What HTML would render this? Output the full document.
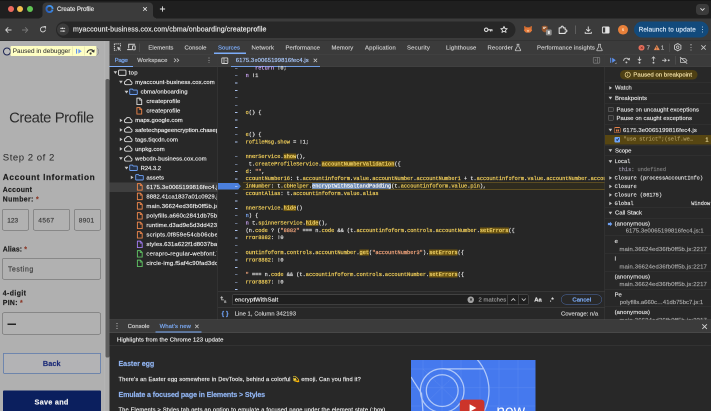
<!DOCTYPE html>
<html lang="en"><head><meta charset="utf-8"><title>Create Profile</title>
<style>
html,body{margin:0;padding:0;background:#282828;overflow:hidden;}
body{width:711px;height:411px;position:relative;}
#root{position:absolute;left:0;top:0;width:1422px;height:822px;transform:scale(0.5);transform-origin:0 0;overflow:hidden;will-change:transform;background:#282828;font-family:'Liberation Sans', sans-serif;}
.a{position:absolute;display:block;}
.t{white-space:nowrap;-webkit-text-stroke:0.35px currentColor;}
.hl{background:#6b5411;}
.hl span{color:#f3d469 !important;}
.sel{background:#6f8db6;}
.sel span,.sel2 span{color:#f4f4f4 !important;}
.sel2{background:#5a7299;}
</style></head><body><div id="root">
<div class="a" style="left:0px;top:0px;width:1422px;height:36.6px;background:#1f1f1f;"></div>
<div class="a" style="left:0px;top:36.6px;width:1422px;height:44.4px;background:#3b3b3b;"></div>
<div class="a" style="left:0px;top:0px;width:1422px;height:1.8px;background:#151515;"></div>
<div class="a" style="left:15.6px;top:12.2px;width:12px;height:12px;background:#ec6a5e;border-radius:50%;"></div>
<div class="a" style="left:34.2px;top:12.2px;width:12px;height:12px;background:#f4bf4f;border-radius:50%;"></div>
<div class="a" style="left:54px;top:12.2px;width:12px;height:12px;background:#61c554;border-radius:50%;"></div>
<div class="a" style="left:84.8px;top:4.8px;width:221.2px;height:32.6px;background:#3b3b3b;border-radius:8px 8px 0 0;"></div>
<div class="a" style="left:78.8px;top:30.4px;width:6px;height:6.2px;background:radial-gradient(circle at 0 0, #1f1f1f 5.5px, #3b3b3b 6.3px);"></div>
<div class="a" style="left:306px;top:30.4px;width:6px;height:6.2px;background:radial-gradient(circle at 100% 0, #1f1f1f 5.5px, #3b3b3b 6.3px);"></div>
<svg class="a" style="left:89.8px;top:8.8px;width:18px;height:18px;" viewBox="0 0 9 9"><defs><linearGradient id="fg" x1="1" y1="0" x2="0" y2="1"><stop offset="0" stop-color="#4aa0f5"/><stop offset="1" stop-color="#2458b8"/></linearGradient></defs><circle cx="4.5" cy="4.5" r="3.1" fill="none" stroke="url(#fg)" stroke-width="1.9" stroke-dasharray="18.4 1.1" transform="rotate(10 4.5 4.5)"/></svg>
<span class="a t" id="t1" style="top:9.52px;line-height:17.36px;font-size:12.4px;color:#e3e3e3;font-family:'Liberation Sans', sans-serif;letter-spacing:-0.126px;left:114px;">Create Profile</span>
<svg class="a" style="left:285.4px;top:12.8px;width:10px;height:10px;" viewBox="0 0 5 5"><path d="M.7.7L4.3 4.3M4.3.7L.7 4.3" stroke="#e3e3e3" stroke-width=".8" fill="none"/></svg>
<svg class="a" style="left:319.0px;top:11.8px;width:12px;height:12px;" viewBox="0 0 6 6"><path d="M3 .4V5.6M.4 3H5.6" stroke="#e3e3e3" stroke-width=".9" fill="none"/></svg>
<div class="a" style="left:1392.4px;top:7.6px;width:25.4px;height:22px;background:#3b3b3b;border-radius:7.0px;"></div>
<svg class="a" style="left:1399.0px;top:14px;width:12px;height:10px;" viewBox="0 0 6 5"><path d="M1 1.3L3 3.4L5 1.3" stroke="#e3e3e3" stroke-width=".9" fill="none"/></svg>
<svg class="a" style="left:9.2px;top:52px;width:16px;height:16px;" viewBox="0 0 8 8"><path d="M7 4H1.3M3.8 1.3L1.2 4L3.8 6.7" stroke="#d5d5d5" stroke-width=".9" fill="none"/></svg>
<svg class="a" style="left:42.4px;top:52px;width:16px;height:16px;" viewBox="0 0 8 8"><path d="M1 4H6.7M4.2 1.3L6.8 4L4.2 6.7" stroke="#777" stroke-width=".9" fill="none"/></svg>
<svg class="a" style="left:78px;top:51.2px;width:16px;height:16px;" viewBox="0 0 8 8"><path d="M6.4 4.2A2.5 2.5 0 1 1 5.6 2.1" stroke="#d5d5d5" stroke-width=".9" fill="none"/><path d="M4.6 1.1H6.6V3.1" stroke="#d5d5d5" stroke-width=".9" fill="none"/></svg>
<div class="a" style="left:112px;top:42.6px;width:919.0px;height:33.2px;background:#272727;border-radius:16.6px;"></div>
<div class="a" style="left:113.8px;top:47.2px;width:24px;height:24px;background:#3b3b3b;border-radius:12px;"></div>
<svg class="a" style="left:119.4px;top:52.8px;width:12.8px;height:12.8px;" viewBox="0 0 6.4 6.4"><path d="M.8 1.8H2.4M4 1.8H5.6M.8 4.6H2.4M4 4.6H5.6" stroke="#e3e3e3" stroke-width=".9" fill="none"/><circle cx="3" cy="1.8" r=".8" fill="#e3e3e3"/><circle cx="3.6" cy="4.6" r=".8" fill="#e3e3e3"/></svg>
<span class="a t" id="t2" style="top:49.4px;line-height:19.6px;font-size:14px;color:#e8e8e8;font-family:'Liberation Sans', sans-serif;letter-spacing:0.185px;left:146px;">myaccount-business.cox.com/cbma/onboarding/createprofile</span>
<svg class="a" style="left:966.8px;top:51.6px;width:19.2px;height:15.2px;" viewBox="0 0 9.6 7.6"><circle cx="2.7" cy="3.8" r="1.75" fill="none" stroke="#dadada" stroke-width="1.1"/><path d="M4.4 3.8H9M7 3.8V5.5M8.5 3.8V5.2" stroke="#dadada" stroke-width="1.1" fill="none"/></svg>
<svg class="a" style="left:1000px;top:51.2px;width:16px;height:16px;" viewBox="0 0 8 8"><path d="M4 .9L4.95 3L7.2 3.2L5.5 4.7L6 6.9L4 5.75L2 6.9L2.5 4.7L.8 3.2L3.05 3Z" stroke="#dadada" stroke-width=".95" fill="none" stroke-linejoin="round"/></svg>
<svg class="a" style="left:1047.2px;top:51.4px;width:18px;height:15.2px;" viewBox="0 0 9 7.6"><path d="M.6 .5L3.4 1.9H5.6L8.4 .5L8.1 3.6L8.6 5L6.6 7.1H2.4L.4 5L.9 3.6Z" fill="#e67a3a"/><path d="M3.2 4.6L4.5 7.1L5.8 4.6Z" fill="#f4c49c"/><path d="M.6 .5L3.4 1.9L2.6 3.6ZM8.4 .5L5.6 1.9L6.4 3.6Z" fill="#c9652a"/></svg>
<svg class="a" style="left:1082.4px;top:50.4px;width:22.4px;height:22px;" viewBox="0 0 11.2 11"><path d="M.8 1.4Q3.6 -.2 6.6 1.4V4.6Q6 6.6 3.7 7.4Q1.4 6.6 .8 4.6Z" fill="#96562e"/><path d="M2 2.3H5.2M2 3.6H4" stroke="#ead9c8" stroke-width=".8"/><rect x="4.9" y="4.5" width="5.8" height="5.9" rx="1.1" fill="#8d8d8d"/><rect x="6.9" y="5.9" width="1.9" height="3.1" rx=".5" fill="#e8e8e8"/></svg>
<svg class="a" style="left:1115.8px;top:49.8px;width:19.4px;height:19.4px;" viewBox="0 0 10 10"><path d="M1.2 3H3.2V2.3A1.1 1.1 0 0 1 5.4 2.3V3H7.4V5H8.1A1.1 1.1 0 0 1 8.1 7.2H7.4V8.7H1.2Z" stroke="#e4e4e4" stroke-width="1.05" fill="none" stroke-linejoin="round"/></svg>
<div class="a" style="left:1150.4px;top:51.0px;width:1.2px;height:17.0px;background:#5e5e5e;"></div>
<svg class="a" style="left:1167.6px;top:50.8px;width:17.0px;height:18px;" viewBox="0 0 8.5 9"><path d="M4.25 1V5.6M2.2 3.8L4.25 5.8L6.3 3.8M1.2 6.4V7.8H7.3V6.4" stroke="#e3e3e3" stroke-width=".9" fill="none"/></svg>
<svg class="a" style="left:1203.0px;top:51.6px;width:17.0px;height:16px;" viewBox="0 0 8.5 8"><rect x=".9" y="1" width="6.7" height="6" rx=".8" fill="none" stroke="#e3e3e3" stroke-width=".9"/><rect x="3.7" y="1" width="3.9" height="6" fill="#e3e3e3"/></svg>
<div class="a" style="left:1236.4px;top:49.6px;width:19.2px;height:19.2px;background:#e8803a;border-radius:50%;"></div>
<span class="a t" id="t3" style="top:52.76px;line-height:12.88px;font-size:9.2px;color:#ffd9b8;font-family:'Liberation Sans', sans-serif;left:1246px;transform:translateX(-50%);">s</span>
<div class="a" style="left:1268px;top:43.0px;width:149.0px;height:32.4px;background:#124a7c;border-radius:16.2px;"></div>
<span class="a t" id="t4" style="top:50.58px;line-height:17.64px;font-size:12.6px;color:#dcebfb;font-family:'Liberation Sans', sans-serif;letter-spacing:0.287px;left:1277.4px;">Relaunch to update</span>
<div class="a" style="left:1404.2px;top:53.3px;width:1.9px;height:1.9px;background:#dcebfb;border-radius:50%;"></div>
<div class="a" style="left:1404.2px;top:58.3px;width:1.9px;height:1.9px;background:#dcebfb;border-radius:50%;"></div>
<div class="a" style="left:1404.2px;top:63.3px;width:1.9px;height:1.9px;background:#dcebfb;border-radius:50%;"></div>
<div class="a" style="left:0px;top:81.0px;width:211.2px;height:742px;background:#b0b0b0;"></div>
<div class="a" style="left:0px;top:80.2px;width:1422px;height:1.4px;background:#333;"></div>
<div class="a" style="left:208px;top:81.6px;width:2px;height:742px;background:#b4b4b4;"></div>
<div class="a" style="left:210.8px;top:81.6px;width:8.6px;height:742px;background:#adadad;"></div>
<div class="a" style="left:211.0px;top:158px;width:8.2px;height:557.0px;background:#5f5f5f;border-radius:3.6px;"></div>
<div class="a" style="left:5.6px;top:95.2px;width:16px;height:16px;background:#bcbcbc;border-radius:50%;border:2.4px solid #1c2452;box-sizing:border-box;"></div>
<div class="a" style="left:181.2px;top:94.4px;width:17.2px;height:17.2px;border-radius:50%;border:1.5px solid #777;box-sizing:border-box;"></div>
<div class="a" style="left:21.0px;top:92.4px;width:172.4px;height:19.4px;background:#ffffc4;border-radius:2px;"></div>
<span class="a t" id="t5" style="top:93.44px;line-height:17.92px;font-size:12.8px;color:#303030;font-family:'Liberation Sans', sans-serif;letter-spacing:0.047px;left:25.4px;-webkit-text-stroke:0.1px currentColor;">Paused in debugger</span>
<div class="a" style="left:144.6px;top:93.2px;width:1.0px;height:17.8px;background:#d6d6a8;"></div>
<div class="a" style="left:169.2px;top:93.2px;width:1.0px;height:17.8px;background:#d6d6a8;"></div>
<svg class="a" style="left:150.8px;top:95.8px;width:14px;height:13.0px;" viewBox="0 0 6.5 6"><path d="M1 .8V5.2" stroke="#5b8ff0" stroke-width="1"/><path d="M2.6 .8L5.8 3L2.6 5.2Z" fill="#6b9cf3"/></svg>
<svg class="a" style="left:172.4px;top:94.8px;width:18.8px;height:15.2px;" viewBox="0 0 8.2 6.6"><path d="M1 4.6A3.1 3.1 0 0 1 6.9 3.8" stroke="#3a3a3a" stroke-width="1" fill="none"/><path d="M7.6 1.7L7.1 4.6L4.6 3.5Z" fill="#3a3a3a"/><circle cx="4" cy="5.2" r=".95" fill="#3a3a3a"/></svg>
<span class="a t" id="t6" style="top:213.68px;line-height:41.44px;font-size:29.6px;color:#2b2b2b;font-family:'Liberation Sans', sans-serif;letter-spacing:-0.838px;left:102.8px;transform:translateX(-50%);-webkit-text-stroke:0;">Create Profile</span>
<span class="a t" id="t7" style="top:302.16px;line-height:26.88px;font-size:19.2px;color:#262626;font-family:'Liberation Sans', sans-serif;letter-spacing:1.017px;left:5.6px;-webkit-text-stroke:0;">Step 2 of 2</span>
<span class="a t" id="t8" style="top:343.18px;line-height:23.24px;font-size:16.6px;color:#1d1d1d;font-family:'Liberation Sans', sans-serif;font-weight:700;letter-spacing:1.197px;left:5.6px;">Account Information</span>
<span class="a t" id="t9" style="top:370.14px;line-height:19.32px;font-size:13.8px;color:#1d1d1d;font-family:'Liberation Sans', sans-serif;font-weight:700;letter-spacing:0.514px;left:5.6px;">Account</span>
<span class="a t" id="t10" style="top:389.14px;line-height:19.32px;font-size:13.8px;color:#1d1d1d;font-family:'Liberation Sans', sans-serif;font-weight:700;letter-spacing:0.718px;left:5.6px;">Number: <span style="color:#8c3a2a">*</span></span>
<div class="a" style="left:4.2px;top:417.8px;width:53.6px;height:43.4px;background:#b1b1b1;border-radius:4px;border:1.1px solid #5e5e5e;box-sizing:border-box;"></div>
<div class="a" style="left:66.4px;top:417.8px;width:73.4px;height:43.4px;background:#b1b1b1;border-radius:4px;border:1.1px solid #5e5e5e;box-sizing:border-box;"></div>
<div class="a" style="left:148px;top:417.8px;width:54px;height:43.4px;background:#b1b1b1;border-radius:4px;border:1.1px solid #5e5e5e;box-sizing:border-box;"></div>
<span class="a t" id="t11" style="top:431.96px;line-height:18.48px;font-size:13.2px;color:#3c3c3c;font-family:'Liberation Sans', sans-serif;letter-spacing:-0.005px;left:14.4px;">123</span>
<span class="a t" id="t12" style="top:431.96px;line-height:18.48px;font-size:13.2px;color:#3c3c3c;font-family:'Liberation Sans', sans-serif;letter-spacing:0.714px;left:76.6px;">4567</span>
<span class="a t" id="t13" style="top:431.96px;line-height:18.48px;font-size:13.2px;color:#3c3c3c;font-family:'Liberation Sans', sans-serif;letter-spacing:0.414px;left:157.6px;">8901</span>
<span class="a t" id="t14" style="top:488.54px;line-height:19.32px;font-size:13.8px;color:#1d1d1d;font-family:'Liberation Sans', sans-serif;font-weight:700;letter-spacing:0.202px;left:5.6px;">Alias: <span style="color:#8c3a2a">*</span></span>
<div class="a" style="left:4.2px;top:516.4px;width:197.8px;height:43.0px;background:#b1b1b1;border-radius:4px;border:1.1px solid #5e5e5e;box-sizing:border-box;"></div>
<span class="a t" id="t15" style="top:528.74px;line-height:19.32px;font-size:13.8px;color:#3c3c3c;font-family:'Liberation Sans', sans-serif;letter-spacing:1.126px;left:16px;">Testing</span>
<span class="a t" id="t16" style="top:577.14px;line-height:19.32px;font-size:13.8px;color:#1d1d1d;font-family:'Liberation Sans', sans-serif;font-weight:700;letter-spacing:0.830px;left:5.6px;">4-digit</span>
<span class="a t" id="t17" style="top:596.34px;line-height:19.32px;font-size:13.8px;color:#1d1d1d;font-family:'Liberation Sans', sans-serif;font-weight:700;letter-spacing:0.598px;left:5.6px;">PIN: <span style="color:#8c3a2a">*</span></span>
<div class="a" style="left:4.2px;top:625.0px;width:197.8px;height:44.2px;background:#b1b1b1;border-radius:4px;border:1.1px solid #5e5e5e;box-sizing:border-box;"></div>
<div class="a" style="left:15.4px;top:646.6px;width:16.6px;height:3.0px;background:#222;"></div>
<div class="a" style="left:5.8px;top:705.6px;width:195.8px;height:41.4px;background:#b3b3b5;border-radius:2px;border:1.6px solid #2b59a6;box-sizing:border-box;"></div>
<span class="a t" id="t18" style="top:716.78px;line-height:20.44px;font-size:14.6px;color:#1d2c78;font-family:'Liberation Sans', sans-serif;font-weight:700;letter-spacing:0.177px;left:103.6px;transform:translateX(-50%);">Back</span>
<div class="a" style="left:5.8px;top:781.4px;width:195.8px;height:48px;background:#0b1f5e;border-radius:2px;"></div>
<span class="a t" id="t19" style="top:794.18px;line-height:20.44px;font-size:14.6px;color:#f2f2f2;font-family:'Liberation Sans', sans-serif;font-weight:700;letter-spacing:0.513px;left:103.2px;transform:translateX(-50%);">Save and</span>
<div class="a" style="left:219.4px;top:81.8px;width:1202.6px;height:742px;background:#282828;"></div>
<div class="a" style="left:219.4px;top:81.8px;width:1202.6px;height:52.2px;background:#3b3b3b;"></div>
<div class="a" style="left:219.4px;top:107.8px;width:1202.6px;height:1.0px;background:#454545;"></div>
<div class="a" style="left:219.4px;top:133.4px;width:1202.6px;height:1.0px;background:#454545;"></div>
<svg class="a" style="left:227.2px;top:85.6px;width:16.8px;height:16.8px;" viewBox="0 0 8.4 8.4"><path d="M7 3.4V.9H.9V7.3H3.3" stroke="#d2d2d2" stroke-width="1" fill="none" stroke-dasharray="1.3 .8"/><path d="M3.7 3.7L7.6 5L5.9 5.7L7.5 7.3L6.9 7.9L5.3 6.3L4.7 7.9Z" fill="#d2d2d2"/></svg>
<svg class="a" style="left:252.8px;top:86.4px;width:19.2px;height:15.2px;" viewBox="0 0 9.6 7.6"><path d="M2.2 5.4V1.2H8.6" stroke="#d2d2d2" stroke-width="1" fill="none"/><path d="M.6 6.6H5.4" stroke="#d2d2d2" stroke-width="1.1"/><rect x="6" y="2.9" width="2.7" height="3.9" rx=".5" fill="none" stroke="#d2d2d2" stroke-width=".95"/></svg>
<div class="a" style="left:279.0px;top:86.8px;width:1.0px;height:16.8px;background:#5a5a5a;"></div>
<span class="a t" id="t20" style="top:86.54px;line-height:16.52px;font-size:11.8px;color:#cbcbcb;font-family:'Liberation Sans', sans-serif;letter-spacing:0.102px;left:296.8px;">Elements</span>
<span class="a t" id="t21" style="top:86.54px;line-height:16.52px;font-size:11.8px;color:#cbcbcb;font-family:'Liberation Sans', sans-serif;letter-spacing:0.100px;left:369.0px;">Console</span>
<span class="a t" id="t22" style="top:86.54px;line-height:16.52px;font-size:11.8px;color:#7cacf8;font-family:'Liberation Sans', sans-serif;letter-spacing:0.103px;left:436px;">Sources</span>
<span class="a t" id="t23" style="top:86.54px;line-height:16.52px;font-size:11.8px;color:#cbcbcb;font-family:'Liberation Sans', sans-serif;letter-spacing:0.276px;left:503.0px;">Network</span>
<span class="a t" id="t24" style="top:86.54px;line-height:16.52px;font-size:11.8px;color:#cbcbcb;font-family:'Liberation Sans', sans-serif;letter-spacing:0.132px;left:571.0px;">Performance</span>
<span class="a t" id="t25" style="top:86.54px;line-height:16.52px;font-size:11.8px;color:#cbcbcb;font-family:'Liberation Sans', sans-serif;letter-spacing:0.165px;left:663.0px;">Memory</span>
<span class="a t" id="t26" style="top:86.54px;line-height:16.52px;font-size:11.8px;color:#cbcbcb;font-family:'Liberation Sans', sans-serif;letter-spacing:0.389px;left:730px;">Application</span>
<span class="a t" id="t27" style="top:86.54px;line-height:16.52px;font-size:11.8px;color:#cbcbcb;font-family:'Liberation Sans', sans-serif;letter-spacing:0.422px;left:814px;">Security</span>
<span class="a t" id="t28" style="top:86.54px;line-height:16.52px;font-size:11.8px;color:#cbcbcb;font-family:'Liberation Sans', sans-serif;letter-spacing:0.327px;left:892px;">Lighthouse</span>
<span class="a t" id="t29" style="top:86.54px;line-height:16.52px;font-size:11.8px;color:#cbcbcb;font-family:'Liberation Sans', sans-serif;letter-spacing:0.309px;left:975.0px;">Recorder</span>
<span class="a t" id="t30" style="top:86.54px;line-height:16.52px;font-size:11.8px;color:#cbcbcb;font-family:'Liberation Sans', sans-serif;letter-spacing:0.259px;left:1074px;">Performance insights</span>
<div class="a" style="left:428px;top:105.2px;width:64px;height:2.4px;background:#7cacf8;"></div>
<svg class="a" style="left:1027.6px;top:86.6px;width:16px;height:16px;" viewBox="0 0 8 8"><path d="M2.6 .8H5.4M3.2 .8V3.2L1.3 6.6A.5.5 0 0 0 1.7 7.3H6.3A.5.5 0 0 0 6.7 6.6L4.8 3.2V.8" stroke="#c7c7c7" stroke-width=".75" fill="none"/></svg>
<svg class="a" style="left:1191.2px;top:86.6px;width:16px;height:16px;" viewBox="0 0 8 8"><path d="M2.6 .8H5.4M3.2 .8V3.2L1.3 6.6A.5.5 0 0 0 1.7 7.3H6.3A.5.5 0 0 0 6.7 6.6L4.8 3.2V.8" stroke="#c7c7c7" stroke-width=".75" fill="none"/></svg>
<div class="a" style="left:1277.4px;top:89.6px;width:11.4px;height:11.4px;background:#e56f5c;border-radius:50%;"></div>
<svg class="a" style="left:1279.7px;top:91.9px;width:6.8px;height:6.8px;" viewBox="0 0 3.4 3.4"><path d="M.7.7L2.7 2.7M2.7.7L.7 2.7" stroke="#8a3528" stroke-width=".7"/></svg>
<span class="a t" id="t31" style="top:86.94px;line-height:16.52px;font-size:11.8px;color:#bdbdbd;font-family:'Liberation Sans', sans-serif;left:1293.2px;">7</span>
<svg class="a" style="left:1306.6px;top:89.0px;width:13.2px;height:12px;" viewBox="0 0 6.6 6"><path d="M3.3.4L6.3 5.6H.3Z" fill="#ec8d58"/><path d="M3.3 2.2V3.8" stroke="#4a2a10" stroke-width=".7"/><circle cx="3.3" cy="4.6" r=".4" fill="#4a2a10"/></svg>
<span class="a t" id="t32" style="top:86.94px;line-height:16.52px;font-size:11.8px;color:#bdbdbd;font-family:'Liberation Sans', sans-serif;left:1321.8px;">1</span>
<div class="a" style="left:1338.6px;top:86.8px;width:1.0px;height:16.8px;background:#5a5a5a;"></div>
<svg class="a" style="left:1347.0px;top:86.4px;width:16.8px;height:16.8px;" viewBox="0 0 8.4 8.4"><path d="M4.2 .55L7.4 2.4V6L4.2 7.85L1 6V2.4Z" stroke="#c4c4c4" stroke-width=".95" fill="none" stroke-linejoin="round"/><circle cx="4.2" cy="4.2" r="1.25" fill="none" stroke="#c4c4c4" stroke-width=".85"/></svg>
<div class="a" style="left:1380.6px;top:88.4px;width:2.4px;height:2.4px;background:#c7c7c7;border-radius:50%;"></div>
<div class="a" style="left:1380.6px;top:93.6px;width:2.4px;height:2.4px;background:#c7c7c7;border-radius:50%;"></div>
<div class="a" style="left:1380.6px;top:98.8px;width:2.4px;height:2.4px;background:#c7c7c7;border-radius:50%;"></div>
<svg class="a" style="left:1401.2px;top:88.8px;width:12px;height:12px;" viewBox="0 0 6 6"><path d="M.8.8L5.2 5.2M5.2.8L.8 5.2" stroke="#c7c7c7" stroke-width=".8" fill="none"/></svg>
<span class="a t" id="t33" style="top:112.34px;line-height:16.52px;font-size:11.8px;color:#7cacf8;font-family:'Liberation Sans', sans-serif;letter-spacing:-0.591px;left:229.6px;">Page</span>
<span class="a t" id="t34" style="top:112.34px;line-height:16.52px;font-size:11.8px;color:#cbcbcb;font-family:'Liberation Sans', sans-serif;letter-spacing:0.200px;left:274.4px;">Workspace</span>
<svg class="a" style="left:346.4px;top:115.2px;width:14px;height:11.2px;" viewBox="0 0 7 5.6"><path d="M1 1L3 2.8L1 4.6M3.8 1L5.8 2.8L3.8 4.6" stroke="#c7c7c7" stroke-width=".75" fill="none"/></svg>
<div class="a" style="left:417.2px;top:114.9px;width:1.9px;height:1.9px;background:#c7c7c7;border-radius:50%;"></div>
<div class="a" style="left:417.2px;top:119.7px;width:1.9px;height:1.9px;background:#c7c7c7;border-radius:50%;"></div>
<div class="a" style="left:417.2px;top:124.5px;width:1.9px;height:1.9px;background:#c7c7c7;border-radius:50%;"></div>
<div class="a" style="left:219.4px;top:132.4px;width:46.4px;height:2px;background:#7cacf8;"></div>
<div class="a" style="left:434.8px;top:108.4px;width:1.0px;height:532px;background:#3c3c3c;"></div>
<svg class="a" style="left:442px;top:113.6px;width:15.2px;height:14.8px;" viewBox="0 0 7.6 7.4"><rect x=".8" y=".9" width="6" height="5.6" rx=".8" fill="none" stroke="#d4d4d4" stroke-width=".9"/><path d="M3 .9V6.5" stroke="#d4d4d4" stroke-width=".8"/><path d="M5.4 2.6L4.3 3.7L5.4 4.8Z" fill="#d4d4d4"/></svg>
<span class="a t" id="t35" style="top:112.34px;line-height:16.52px;font-size:11.8px;color:#a9c7fa;font-family:'Liberation Sans', sans-serif;letter-spacing:0.152px;left:471.6px;">6175.3e0065199816fec4.js</span>
<svg class="a" style="left:625.8px;top:116px;width:9.6px;height:9.6px;" viewBox="0 0 4.8 4.8"><path d="M.7.7L4.1 4.1M4.1.7L.7 4.1" stroke="#c7c7c7" stroke-width=".75" fill="none"/></svg>
<div class="a" style="left:462px;top:132px;width:178px;height:1.8px;background:#6f9be0;"></div>
<svg class="a" style="left:1185.4px;top:113.0px;width:16px;height:15.2px;" viewBox="0 0 8 7.6"><rect x=".8" y=".9" width="6.4" height="5.8" rx=".8" fill="none" stroke="#777" stroke-width=".8"/><path d="M4.9 .9V6.7" stroke="#777" stroke-width=".8"/><path d="M2.4 2.8L3.4 3.8L2.4 4.8" stroke="#777" stroke-width=".6" fill="none"/></svg>
<div class="a" style="left:1209.2px;top:108.4px;width:1.0px;height:532px;background:#3c3c3c;"></div>
<svg class="a" style="left:1219.0px;top:113.6px;width:16px;height:14.8px;" viewBox="0 0 8 7.4"><path d="M1.2 .8V5.8" stroke="#5d92f0" stroke-width=".95"/><path d="M2.7 .8L6.3 3.3L2.7 5.8Z" fill="#5d92f0"/><path d="M7 5.2V7H5.3Z" fill="#9a9a9a"/></svg>
<svg class="a" style="left:1244.8px;top:113.2px;width:16.8px;height:14.8px;" viewBox="0 0 8.4 7.4"><path d="M1.1 4.4A3 3 0 0 1 6.7 3.2" stroke="#c7c7c7" stroke-width=".9" fill="none"/><path d="M7.6 1.2L7 4.1L4.6 2.9Z" fill="#c7c7c7"/><circle cx="3.9" cy="5.9" r=".95" fill="#c7c7c7"/></svg>
<svg class="a" style="left:1272px;top:112.4px;width:14px;height:16.4px;" viewBox="0 0 7 8.2"><path d="M3.5 .6V4.4M1.8 2.9L3.5 4.6L5.2 2.9" stroke="#c7c7c7" stroke-width=".85" fill="none"/><circle cx="3.5" cy="6.7" r=".95" fill="#c7c7c7"/></svg>
<svg class="a" style="left:1299.6px;top:112.4px;width:14px;height:16.4px;" viewBox="0 0 7 8.2"><path d="M3.5 4.8V1M1.8 2.5L3.5 .8L5.2 2.5" stroke="#c7c7c7" stroke-width=".85" fill="none"/><circle cx="3.5" cy="6.7" r=".95" fill="#c7c7c7"/></svg>
<svg class="a" style="left:1323.2px;top:114px;width:18px;height:13.2px;" viewBox="0 0 9 6.6"><path d="M.6 3.3H4.4M3 1.6L4.7 3.3L3 5" stroke="#c7c7c7" stroke-width=".85" fill="none"/><circle cx="7.2" cy="3.3" r=".95" fill="#c7c7c7"/></svg>
<div class="a" style="left:1350.8px;top:112.4px;width:1.0px;height:16.8px;background:#5a5a5a;"></div>
<svg class="a" style="left:1358px;top:112.8px;width:19.2px;height:15.6px;" viewBox="0 0 9.6 7.8"><path d="M1.6 2H6L8 4L6 6H1.6Z" stroke="#c7c7c7" stroke-width=".8" fill="none" stroke-linejoin="round"/><path d="M1 .6L8.2 7.2" stroke="#c7c7c7" stroke-width=".8"/></svg>
<div class="a" style="left:219.4px;top:364.59px;width:215.4px;height:19.06px;background:#3f3f3f;"></div>
<svg class="a" style="left:227.0px;top:142.4px;width:7.6px;height:6.4px;" viewBox="0 0 3.8 3.2"><path d="M.1 .3H3.7L1.9 3Z" fill="#c7c7c7"/></svg>
<svg class="a" style="left:236px;top:139.0px;width:18px;height:12.8px;" viewBox="0 0 9 6.4"><rect x=".55" y=".55" width="7.4" height="5.3" rx=".9" stroke="#dadada" stroke-width=".95" fill="none"/></svg>
<span class="a t" id="t36" style="top:137.14px;line-height:16.52px;font-size:11.8px;color:#ececec;font-family:'Liberation Sans', sans-serif;letter-spacing:0.665px;left:257.4px;">top</span>
<svg class="a" style="left:238.0px;top:161.46px;width:7.6px;height:6.4px;" viewBox="0 0 3.8 3.2"><path d="M.1 .3H3.7L1.9 3Z" fill="#c7c7c7"/></svg>
<svg class="a" style="left:247.0px;top:158.06px;width:18.8px;height:12.8px;" viewBox="0 0 9.4 6.4"><path d="M2.4 5.7H7.2A1.7 1.7 0 0 0 7.3 2.4A2.65 2.65 0 0 0 2.3 2.1A1.85 1.85 0 0 0 2.4 5.7Z" stroke="#dadada" stroke-width=".9" fill="none"/></svg>
<span class="a t" id="t37" style="top:156.2px;line-height:16.52px;font-size:11.8px;color:#ececec;font-family:'Liberation Sans', sans-serif;letter-spacing:0.179px;left:270.2px;">myaccount-business.cox.com</span>
<svg class="a" style="left:248.8px;top:180.52px;width:7.6px;height:6.4px;" viewBox="0 0 3.8 3.2"><path d="M.1 .3H3.7L1.9 3Z" fill="#c7c7c7"/></svg>
<svg class="a" style="left:258.4px;top:176.92px;width:18px;height:13.2px;" viewBox="0 0 9 6.6"><path d="M.7 1.2A.6.6 0 0 1 1.3 .6H3.4L4.3 1.6H7.7A.6.6 0 0 1 8.3 2.2V5.4A.6.6 0 0 1 7.7 6H1.3A.6.6 0 0 1 .7 5.4Z" stroke="#6ea0f2" stroke-width=".9" fill="#263349"/></svg>
<span class="a t" id="t38" style="top:175.26px;line-height:16.52px;font-size:11.8px;color:#ececec;font-family:'Liberation Sans', sans-serif;letter-spacing:0.189px;left:281.2px;">cbma/onboarding</span>
<svg class="a" style="left:272px;top:194.78px;width:13.2px;height:15.6px;" viewBox="0 0 6.6 7.8"><path d="M.9 .6H3.9L5.7 2.4V7.1H.9Z" stroke="#d8d8d8" stroke-width=".95" fill="none" stroke-linejoin="round"/><path d="M3.7 .7V2.6H5.6" stroke="#d8d8d8" stroke-width=".7" fill="none"/></svg>
<span class="a t" id="t39" style="top:194.32px;line-height:16.52px;font-size:11.8px;color:#ececec;font-family:'Liberation Sans', sans-serif;letter-spacing:0.237px;left:292.8px;">createprofile</span>
<svg class="a" style="left:272px;top:213.84px;width:13.2px;height:15.6px;" viewBox="0 0 6.6 7.8"><path d="M.9 .6H3.9L5.7 2.4V7.1H.9Z" stroke="#e8834a" stroke-width=".95" fill="none" stroke-linejoin="round"/><path d="M3.7 .7V2.6H5.6" stroke="#e8834a" stroke-width=".7" fill="none"/></svg>
<span class="a t" id="t40" style="top:213.38px;line-height:16.52px;font-size:11.8px;color:#ececec;font-family:'Liberation Sans', sans-serif;letter-spacing:0.237px;left:292.8px;">createprofile</span>
<svg class="a" style="left:239.0px;top:236.9px;width:6.4px;height:7.6px;" viewBox="0 0 3.2 3.8"><path d="M.3 .1V3.7L3 1.9Z" fill="#c7c7c7"/></svg>
<svg class="a" style="left:247.0px;top:234.3px;width:18.8px;height:12.8px;" viewBox="0 0 9.4 6.4"><path d="M2.4 5.7H7.2A1.7 1.7 0 0 0 7.3 2.4A2.65 2.65 0 0 0 2.3 2.1A1.85 1.85 0 0 0 2.4 5.7Z" stroke="#dadada" stroke-width=".9" fill="none"/></svg>
<span class="a t" id="t41" style="top:232.44px;line-height:16.52px;font-size:11.8px;color:#ececec;font-family:'Liberation Sans', sans-serif;letter-spacing:0.152px;left:270.2px;">maps.google.com</span>
<svg class="a" style="left:239.0px;top:255.96px;width:6.4px;height:7.6px;" viewBox="0 0 3.2 3.8"><path d="M.3 .1V3.7L3 1.9Z" fill="#c7c7c7"/></svg>
<svg class="a" style="left:247.0px;top:253.36px;width:18.8px;height:12.8px;" viewBox="0 0 9.4 6.4"><path d="M2.4 5.7H7.2A1.7 1.7 0 0 0 7.3 2.4A2.65 2.65 0 0 0 2.3 2.1A1.85 1.85 0 0 0 2.4 5.7Z" stroke="#dadada" stroke-width=".9" fill="none"/></svg>
<span class="a t" id="t42" style="top:251.5px;line-height:16.52px;font-size:11.8px;color:#ececec;font-family:'Liberation Sans', sans-serif;letter-spacing:0.051px;left:270.2px;width:164.2px;overflow:hidden;">safetechpageencryption.chasepaymentech.com</span>
<svg class="a" style="left:239.0px;top:275.02px;width:6.4px;height:7.6px;" viewBox="0 0 3.2 3.8"><path d="M.3 .1V3.7L3 1.9Z" fill="#c7c7c7"/></svg>
<svg class="a" style="left:247.0px;top:272.42px;width:18.8px;height:12.8px;" viewBox="0 0 9.4 6.4"><path d="M2.4 5.7H7.2A1.7 1.7 0 0 0 7.3 2.4A2.65 2.65 0 0 0 2.3 2.1A1.85 1.85 0 0 0 2.4 5.7Z" stroke="#dadada" stroke-width=".9" fill="none"/></svg>
<span class="a t" id="t43" style="top:270.56px;line-height:16.52px;font-size:11.8px;color:#ececec;font-family:'Liberation Sans', sans-serif;letter-spacing:0.212px;left:270.2px;">tags.tiqcdn.com</span>
<svg class="a" style="left:239.0px;top:294.08px;width:6.4px;height:7.6px;" viewBox="0 0 3.2 3.8"><path d="M.3 .1V3.7L3 1.9Z" fill="#c7c7c7"/></svg>
<svg class="a" style="left:247.0px;top:291.48px;width:18.8px;height:12.8px;" viewBox="0 0 9.4 6.4"><path d="M2.4 5.7H7.2A1.7 1.7 0 0 0 7.3 2.4A2.65 2.65 0 0 0 2.3 2.1A1.85 1.85 0 0 0 2.4 5.7Z" stroke="#dadada" stroke-width=".9" fill="none"/></svg>
<span class="a t" id="t44" style="top:289.62px;line-height:16.52px;font-size:11.8px;color:#ececec;font-family:'Liberation Sans', sans-serif;letter-spacing:0.187px;left:270.2px;">unpkg.com</span>
<svg class="a" style="left:238.0px;top:313.94px;width:7.6px;height:6.4px;" viewBox="0 0 3.8 3.2"><path d="M.1 .3H3.7L1.9 3Z" fill="#c7c7c7"/></svg>
<svg class="a" style="left:247.0px;top:310.54px;width:18.8px;height:12.8px;" viewBox="0 0 9.4 6.4"><path d="M2.4 5.7H7.2A1.7 1.7 0 0 0 7.3 2.4A2.65 2.65 0 0 0 2.3 2.1A1.85 1.85 0 0 0 2.4 5.7Z" stroke="#dadada" stroke-width=".9" fill="none"/></svg>
<span class="a t" id="t45" style="top:308.68px;line-height:16.52px;font-size:11.8px;color:#ececec;font-family:'Liberation Sans', sans-serif;letter-spacing:0.202px;left:270.2px;">webcdn-business.cox.com</span>
<svg class="a" style="left:248.8px;top:333.0px;width:7.6px;height:6.4px;" viewBox="0 0 3.8 3.2"><path d="M.1 .3H3.7L1.9 3Z" fill="#c7c7c7"/></svg>
<svg class="a" style="left:258.4px;top:329.4px;width:18px;height:13.2px;" viewBox="0 0 9 6.6"><path d="M.7 1.2A.6.6 0 0 1 1.3 .6H3.4L4.3 1.6H7.7A.6.6 0 0 1 8.3 2.2V5.4A.6.6 0 0 1 7.7 6H1.3A.6.6 0 0 1 .7 5.4Z" stroke="#6ea0f2" stroke-width=".9" fill="#263349"/></svg>
<span class="a t" id="t46" style="top:327.74px;line-height:16.52px;font-size:11.8px;color:#ececec;font-family:'Liberation Sans', sans-serif;letter-spacing:-0.075px;left:281.2px;">R24.3.2</span>
<svg class="a" style="left:261.2px;top:351.26px;width:6.4px;height:7.6px;" viewBox="0 0 3.2 3.8"><path d="M.3 .1V3.7L3 1.9Z" fill="#c7c7c7"/></svg>
<svg class="a" style="left:270.4px;top:348.46px;width:18px;height:13.2px;" viewBox="0 0 9 6.6"><path d="M.7 1.2A.6.6 0 0 1 1.3 .6H3.4L4.3 1.6H7.7A.6.6 0 0 1 8.3 2.2V5.4A.6.6 0 0 1 7.7 6H1.3A.6.6 0 0 1 .7 5.4Z" stroke="#6ea0f2" stroke-width=".9" fill="#263349"/></svg>
<span class="a t" id="t47" style="top:346.8px;line-height:16.52px;font-size:11.8px;color:#ececec;font-family:'Liberation Sans', sans-serif;letter-spacing:0.182px;left:292.8px;">assets</span>
<svg class="a" style="left:272.8px;top:366.32px;width:13.2px;height:15.6px;" viewBox="0 0 6.6 7.8"><path d="M.9 .6H3.9L5.7 2.4V7.1H.9Z" stroke="#e8834a" stroke-width=".95" fill="none" stroke-linejoin="round"/><path d="M3.7 .7V2.6H5.6" stroke="#e8834a" stroke-width=".7" fill="none"/></svg>
<span class="a t" id="t48" style="top:365.86px;line-height:16.52px;font-size:11.8px;color:#ececec;font-family:'Liberation Sans', sans-serif;letter-spacing:0.277px;left:292.8px;width:141.6px;overflow:hidden;">6175.3e0065199816fec4.js</span>
<svg class="a" style="left:272.8px;top:385.38px;width:13.2px;height:15.6px;" viewBox="0 0 6.6 7.8"><path d="M.9 .6H3.9L5.7 2.4V7.1H.9Z" stroke="#e8834a" stroke-width=".95" fill="none" stroke-linejoin="round"/><path d="M3.7 .7V2.6H5.6" stroke="#e8834a" stroke-width=".7" fill="none"/></svg>
<span class="a t" id="t49" style="top:384.92px;line-height:16.52px;font-size:11.8px;color:#ececec;font-family:'Liberation Sans', sans-serif;letter-spacing:0.168px;left:292.8px;width:141.6px;overflow:hidden;">8882.41ca1837a01c0929.js</span>
<svg class="a" style="left:272.8px;top:404.44px;width:13.2px;height:15.6px;" viewBox="0 0 6.6 7.8"><path d="M.9 .6H3.9L5.7 2.4V7.1H.9Z" stroke="#e8834a" stroke-width=".95" fill="none" stroke-linejoin="round"/><path d="M3.7 .7V2.6H5.6" stroke="#e8834a" stroke-width=".7" fill="none"/></svg>
<span class="a t" id="t50" style="top:403.98px;line-height:16.52px;font-size:11.8px;color:#ececec;font-family:'Liberation Sans', sans-serif;letter-spacing:0.352px;left:292.8px;width:141.6px;overflow:hidden;">main.36624ed36fb0ff5b.js</span>
<svg class="a" style="left:272.8px;top:423.5px;width:13.2px;height:15.6px;" viewBox="0 0 6.6 7.8"><path d="M.9 .6H3.9L5.7 2.4V7.1H.9Z" stroke="#e8834a" stroke-width=".95" fill="none" stroke-linejoin="round"/><path d="M3.7 .7V2.6H5.6" stroke="#e8834a" stroke-width=".7" fill="none"/></svg>
<span class="a t" id="t51" style="top:423.04px;line-height:16.52px;font-size:11.8px;color:#ececec;font-family:'Liberation Sans', sans-serif;letter-spacing:0.365px;left:292.8px;width:141.6px;overflow:hidden;">polyfills.a660c2841db75bc7.js</span>
<svg class="a" style="left:272.8px;top:442.56px;width:13.2px;height:15.6px;" viewBox="0 0 6.6 7.8"><path d="M.9 .6H3.9L5.7 2.4V7.1H.9Z" stroke="#e8834a" stroke-width=".95" fill="none" stroke-linejoin="round"/><path d="M3.7 .7V2.6H5.6" stroke="#e8834a" stroke-width=".7" fill="none"/></svg>
<span class="a t" id="t52" style="top:442.1px;line-height:16.52px;font-size:11.8px;color:#ececec;font-family:'Liberation Sans', sans-serif;letter-spacing:0.319px;left:292.8px;width:141.6px;overflow:hidden;">runtime.d3ad9e5d3dd42384.js</span>
<svg class="a" style="left:272.8px;top:461.62px;width:13.2px;height:15.6px;" viewBox="0 0 6.6 7.8"><path d="M.9 .6H3.9L5.7 2.4V7.1H.9Z" stroke="#e8834a" stroke-width=".95" fill="none" stroke-linejoin="round"/><path d="M3.7 .7V2.6H5.6" stroke="#e8834a" stroke-width=".7" fill="none"/></svg>
<span class="a t" id="t53" style="top:461.16px;line-height:16.52px;font-size:11.8px;color:#ececec;font-family:'Liberation Sans', sans-serif;letter-spacing:0.536px;left:292.8px;width:141.6px;overflow:hidden;">scripts.0f859e54cb06cbe4.js</span>
<svg class="a" style="left:272.8px;top:480.68px;width:13.2px;height:15.6px;" viewBox="0 0 6.6 7.8"><path d="M.9 .6H3.9L5.7 2.4V7.1H.9Z" stroke="#a07af0" stroke-width=".95" fill="none" stroke-linejoin="round"/><path d="M3.7 .7V2.6H5.6" stroke="#a07af0" stroke-width=".7" fill="none"/></svg>
<span class="a t" id="t54" style="top:480.22px;line-height:16.52px;font-size:11.8px;color:#ececec;font-family:'Liberation Sans', sans-serif;letter-spacing:0.292px;left:292.8px;width:141.6px;overflow:hidden;">styles.631a622f1d8037ba.css</span>
<svg class="a" style="left:272.8px;top:499.74px;width:13.2px;height:15.6px;" viewBox="0 0 6.6 7.8"><path d="M.9 .6H3.9L5.7 2.4V7.1H.9Z" stroke="#5fc063" stroke-width=".95" fill="none" stroke-linejoin="round"/><path d="M3.7 .7V2.6H5.6" stroke="#5fc063" stroke-width=".7" fill="none"/></svg>
<span class="a t" id="t55" style="top:499.28px;line-height:16.52px;font-size:11.8px;color:#ececec;font-family:'Liberation Sans', sans-serif;letter-spacing:0.459px;left:292.8px;width:141.6px;overflow:hidden;">cerapro-regular-webfont.7a1f.woff</span>
<svg class="a" style="left:272.8px;top:518.8px;width:13.2px;height:15.6px;" viewBox="0 0 6.6 7.8"><path d="M.9 .6H3.9L5.7 2.4V7.1H.9Z" stroke="#5fc063" stroke-width=".95" fill="none" stroke-linejoin="round"/><path d="M3.7 .7V2.6H5.6" stroke="#5fc063" stroke-width=".7" fill="none"/></svg>
<span class="a t" id="t56" style="top:518.34px;line-height:16.52px;font-size:11.8px;color:#ececec;font-family:'Liberation Sans', sans-serif;letter-spacing:0.349px;left:292.8px;width:141.6px;overflow:hidden;">circle-img.f5af4c90fad3dc1e.svg</span>
<div class="a" style="left:435.8px;top:134.4px;width:773.4px;height:448.8px;background:#262626;"></div>
<div class="a" style="left:435.8px;top:365.23px;width:773.4px;height:14.75px;background:#2e2b1f;"></div>
<div class="a" style="left:486px;top:364.62px;width:723.2px;height:1.1px;background:#8f7220;"></div>
<div class="a" style="left:486px;top:379.38px;width:723.2px;height:1.1px;background:#8f7220;"></div>
<svg class="a" style="left:435.6px;top:366.0px;width:46px;height:13.2px;" viewBox="0 0 23 6.6"><path d="M0 0H20.2L22.8 3.3L20.2 6.6H0Z" fill="#4b7fdc"/></svg>
<div class="a" style="left:470.2px;top:135.9px;width:4.6px;height:1.5px;background:#a9c1ee;"></div>
<div class="a" style="left:470.2px;top:150.65px;width:4.6px;height:1.5px;background:#a9c1ee;"></div>
<div class="a" style="left:470.2px;top:165.4px;width:4.6px;height:1.5px;background:#a9c1ee;"></div>
<div class="a" style="left:470.2px;top:180.15px;width:4.6px;height:1.5px;background:#a9c1ee;"></div>
<div class="a" style="left:470.2px;top:194.9px;width:4.6px;height:1.5px;background:#a9c1ee;"></div>
<div class="a" style="left:470.2px;top:209.65px;width:4.6px;height:1.5px;background:#a9c1ee;"></div>
<div class="a" style="left:470.2px;top:224.4px;width:4.6px;height:1.5px;background:#a9c1ee;"></div>
<div class="a" style="left:470.2px;top:239.15px;width:4.6px;height:1.5px;background:#a9c1ee;"></div>
<div class="a" style="left:470.2px;top:253.9px;width:4.6px;height:1.5px;background:#a9c1ee;"></div>
<div class="a" style="left:470.2px;top:268.65px;width:4.6px;height:1.5px;background:#a9c1ee;"></div>
<div class="a" style="left:470.2px;top:283.4px;width:4.6px;height:1.5px;background:#a9c1ee;"></div>
<div class="a" style="left:470.2px;top:312.9px;width:4.6px;height:1.5px;background:#a9c1ee;"></div>
<div class="a" style="left:470.2px;top:327.65px;width:4.6px;height:1.5px;background:#a9c1ee;"></div>
<div class="a" style="left:470.2px;top:342.4px;width:4.6px;height:1.5px;background:#a9c1ee;"></div>
<div class="a" style="left:470.2px;top:357.15px;width:4.6px;height:1.5px;background:#a9c1ee;"></div>
<div class="a" style="left:470.2px;top:371.9px;width:4.6px;height:1.5px;background:#eef3ff;"></div>
<div class="a" style="left:470.2px;top:386.65px;width:4.6px;height:1.5px;background:#a9c1ee;"></div>
<div class="a" style="left:470.2px;top:401.4px;width:4.6px;height:1.5px;background:#a9c1ee;"></div>
<div class="a" style="left:470.2px;top:416.15px;width:4.6px;height:1.5px;background:#a9c1ee;"></div>
<div class="a" style="left:470.2px;top:430.9px;width:4.6px;height:1.5px;background:#a9c1ee;"></div>
<div class="a" style="left:470.2px;top:445.65px;width:4.6px;height:1.5px;background:#a9c1ee;"></div>
<div class="a" style="left:470.2px;top:460.4px;width:4.6px;height:1.5px;background:#a9c1ee;"></div>
<div class="a" style="left:470.2px;top:475.15px;width:4.6px;height:1.5px;background:#a9c1ee;"></div>
<div class="a" style="left:470.2px;top:489.9px;width:4.6px;height:1.5px;background:#a9c1ee;"></div>
<div class="a" style="left:470.2px;top:504.65px;width:4.6px;height:1.5px;background:#a9c1ee;"></div>
<div class="a" style="left:470.2px;top:519.4px;width:4.6px;height:1.5px;background:#a9c1ee;"></div>
<div class="a" style="left:470.2px;top:534.15px;width:4.6px;height:1.5px;background:#a9c1ee;"></div>
<div class="a" style="left:470.2px;top:548.9px;width:4.6px;height:1.5px;background:#a9c1ee;"></div>
<div class="a" style="left:470.2px;top:563.65px;width:4.6px;height:1.5px;background:#a9c1ee;"></div>
<div class="a" style="left:470.2px;top:578.4px;width:4.6px;height:1.5px;background:#a9c1ee;"></div>
<span class="a t" id="t57" style="top:129.21px;line-height:14.78px;font-size:10.56px;color:#dedede;font-family:'Liberation Mono', monospace;left:491.2px;width:718.0px;overflow:hidden;white-space:pre;-webkit-text-stroke:0.45px currentColor;">   <span style="color:#c9a2f2">return</span> !0;</span>
<span class="a t" id="t58" style="top:143.96px;line-height:14.78px;font-size:10.56px;color:#dedede;font-family:'Liberation Mono', monospace;left:491.2px;width:718.0px;overflow:hidden;white-space:pre;-webkit-text-stroke:0.45px currentColor;"><span style="color:#c9a2f2">n</span> !1</span>
<span class="a t" id="t59" style="top:217.71px;line-height:14.78px;font-size:10.56px;color:#dedede;font-family:'Liberation Mono', monospace;left:491.2px;width:718.0px;overflow:hidden;white-space:pre;-webkit-text-stroke:0.45px currentColor;"><span style="color:#ecca58">o</span>() {</span>
<span class="a t" id="t60" style="top:261.96px;line-height:14.78px;font-size:10.56px;color:#dedede;font-family:'Liberation Mono', monospace;left:491.2px;width:718.0px;overflow:hidden;white-space:pre;-webkit-text-stroke:0.45px currentColor;"><span style="color:#ecca58">e</span>() {</span>
<span class="a t" id="t61" style="top:276.71px;line-height:14.78px;font-size:10.56px;color:#dedede;font-family:'Liberation Mono', monospace;left:491.2px;width:718.0px;overflow:hidden;white-space:pre;-webkit-text-stroke:0.45px currentColor;"><span style="color:#ecca58">rofileMsg</span>.<span style="color:#ecca58">show</span> = !1;</span>
<span class="a t" id="t62" style="top:306.21px;line-height:14.78px;font-size:10.56px;color:#dedede;font-family:'Liberation Mono', monospace;left:491.2px;width:718.0px;overflow:hidden;white-space:pre;-webkit-text-stroke:0.45px currentColor;"><span style="color:#ecca58">nnerService</span>.<span class="hl"><span style="color:#ecca58">show</span></span>(),</span>
<span class="a t" id="t63" style="top:320.96px;line-height:14.78px;font-size:10.56px;color:#dedede;font-family:'Liberation Mono', monospace;left:491.2px;width:718.0px;overflow:hidden;white-space:pre;-webkit-text-stroke:0.45px currentColor;"> <span style="color:#dedede">t</span>.<span style="color:#ecca58">createProfileService</span>.<span class="hl"><span style="color:#ecca58">accountNumberValidation</span></span>({</span>
<span class="a t" id="t64" style="top:335.71px;line-height:14.78px;font-size:10.56px;color:#dedede;font-family:'Liberation Mono', monospace;left:491.2px;width:718.0px;overflow:hidden;white-space:pre;-webkit-text-stroke:0.45px currentColor;"><span style="color:#ecca58">d</span>: <span style="color:#f0a37a">""</span>,</span>
<span class="a t" id="t65" style="top:350.46px;line-height:14.78px;font-size:10.56px;color:#dedede;font-family:'Liberation Mono', monospace;left:491.2px;width:718.0px;overflow:hidden;white-space:pre;-webkit-text-stroke:0.45px currentColor;"><span style="color:#ecca58">ccountNumber16</span>: <span style="color:#dedede">t</span>.<span style="color:#ecca58">accountinfoform</span>.<span style="color:#ecca58">value</span>.<span style="color:#ecca58">accountNumber</span>.<span style="color:#ecca58">accountNumber1</span> + <span style="color:#dedede">t</span>.<span style="color:#ecca58">accountinfoform</span>.<span style="color:#ecca58">value</span>.<span style="color:#ecca58">accountNumber</span>.<span style="color:#ecca58">accountNumber2</span> + <span style="color:#dedede">t</span>.<span style="color:#ecca58">accountinfoform</span>.<span style="color:#ecca58">value</span></span>
<span class="a t" id="t66" style="top:365.21px;line-height:14.78px;font-size:10.56px;color:#dedede;font-family:'Liberation Mono', monospace;left:491.2px;width:718.0px;overflow:hidden;white-space:pre;-webkit-text-stroke:0.45px currentColor;"><span style="color:#ecca58">inNumber</span>: <span style="color:#dedede">t</span>.<span style="color:#ecca58">cbHelper</span>.<span class="sel"><span style="color:#ecca58">encryptWithSalt</span></span><span class="sel2"><span style="color:#ecca58">andPadding</span></span>(<span style="color:#dedede">t</span>.<span style="color:#ecca58">accountinfoform</span>.<span style="color:#ecca58">value</span>.<span style="color:#ecca58">pin</span>),</span>
<span class="a t" id="t67" style="top:379.96px;line-height:14.78px;font-size:10.56px;color:#dedede;font-family:'Liberation Mono', monospace;left:491.2px;width:718.0px;overflow:hidden;white-space:pre;-webkit-text-stroke:0.45px currentColor;"><span style="color:#ecca58">ccountAlias</span>: <span style="color:#dedede">t</span>.<span style="color:#ecca58">accountinfoform</span>.<span style="color:#ecca58">value</span>.<span style="color:#ecca58">alias</span></span>
<span class="a t" id="t68" style="top:409.46px;line-height:14.78px;font-size:10.56px;color:#dedede;font-family:'Liberation Mono', monospace;left:491.2px;width:718.0px;overflow:hidden;white-space:pre;-webkit-text-stroke:0.45px currentColor;"><span style="color:#ecca58">nnerService</span>.<span class="hl"><span style="color:#ecca58">hide</span></span>()</span>
<span class="a t" id="t69" style="top:424.21px;line-height:14.78px;font-size:10.56px;color:#dedede;font-family:'Liberation Mono', monospace;left:491.2px;width:718.0px;overflow:hidden;white-space:pre;-webkit-text-stroke:0.45px currentColor;"><span style="color:#7aa7f5">n</span>) {</span>
<span class="a t" id="t70" style="top:438.96px;line-height:14.78px;font-size:10.56px;color:#dedede;font-family:'Liberation Mono', monospace;left:491.2px;width:718.0px;overflow:hidden;white-space:pre;-webkit-text-stroke:0.45px currentColor;"><span style="color:#c9a2f2">n</span> <span style="color:#dedede">t</span>.<span style="color:#ecca58">spinnerService</span>.<span class="hl"><span style="color:#ecca58">hide</span></span>(),</span>
<span class="a t" id="t71" style="top:453.71px;line-height:14.78px;font-size:10.56px;color:#dedede;font-family:'Liberation Mono', monospace;left:491.2px;width:718.0px;overflow:hidden;white-space:pre;-webkit-text-stroke:0.45px currentColor;">(<span style="color:#dedede">n</span>.<span style="color:#ecca58">code</span> ? (<span style="color:#f0a37a">"8882"</span> === <span style="color:#dedede">n</span>.<span style="color:#ecca58">code</span> &amp;&amp; (<span style="color:#dedede">t</span>.<span style="color:#ecca58">accountinfoform</span>.<span style="color:#ecca58">controls</span>.<span style="color:#ecca58">accountNumber</span>.<span class="hl"><span style="color:#ecca58">setErrors</span></span>({</span>
<span class="a t" id="t72" style="top:468.46px;line-height:14.78px;font-size:10.56px;color:#dedede;font-family:'Liberation Mono', monospace;left:491.2px;width:718.0px;overflow:hidden;white-space:pre;-webkit-text-stroke:0.45px currentColor;"><span style="color:#ecca58">rror8882</span>: !0</span>
<span class="a t" id="t73" style="top:497.96px;line-height:14.78px;font-size:10.56px;color:#dedede;font-family:'Liberation Mono', monospace;left:491.2px;width:718.0px;overflow:hidden;white-space:pre;-webkit-text-stroke:0.45px currentColor;"><span style="color:#ecca58">ountinfoform</span>.<span style="color:#ecca58">controls</span>.<span style="color:#ecca58">accountNumber</span>.<span class="hl"><span style="color:#ecca58">get</span></span>(<span style="color:#f0a37a">"accountNumber3"</span>).<span class="hl"><span style="color:#ecca58">setErrors</span></span>({</span>
<span class="a t" id="t74" style="top:512.71px;line-height:14.78px;font-size:10.56px;color:#dedede;font-family:'Liberation Mono', monospace;left:491.2px;width:718.0px;overflow:hidden;white-space:pre;-webkit-text-stroke:0.45px currentColor;"><span style="color:#ecca58">rror8882</span>: !0</span>
<span class="a t" id="t75" style="top:542.21px;line-height:14.78px;font-size:10.56px;color:#dedede;font-family:'Liberation Mono', monospace;left:491.2px;width:718.0px;overflow:hidden;white-space:pre;-webkit-text-stroke:0.45px currentColor;"><span style="color:#f0a37a">"</span> === <span style="color:#dedede">n</span>.<span style="color:#ecca58">code</span> &amp;&amp; (<span style="color:#dedede">t</span>.<span style="color:#ecca58">accountinfoform</span>.<span style="color:#ecca58">controls</span>.<span style="color:#ecca58">accountNumber</span>.<span class="hl"><span style="color:#ecca58">setErrors</span></span>({</span>
<span class="a t" id="t76" style="top:556.96px;line-height:14.78px;font-size:10.56px;color:#dedede;font-family:'Liberation Mono', monospace;left:491.2px;width:718.0px;overflow:hidden;white-space:pre;-webkit-text-stroke:0.45px currentColor;"><span style="color:#ecca58">rror8887</span>: !0</span>
<div class="a" style="left:435.8px;top:583.2px;width:773.4px;height:32px;background:#282828;"></div>
<div class="a" style="left:435.8px;top:582.8px;width:773.4px;height:1.0px;background:#454545;"></div>
<svg class="a" style="left:439.0px;top:591.2px;width:16px;height:16px;" viewBox="0 0 8 8"><path d="M2.2 1.4V4.4H4.4" stroke="#c7c7c7" stroke-width=".8" fill="none"/><path d="M1 2.6L2.2 1.2L3.4 2.6" stroke="#c7c7c7" stroke-width=".7" fill="none"/><text x="4.6" y="7.4" font-size="3.2" fill="#c7c7c7" font-family="Liberation Sans, sans-serif" font-weight="700">B</text></svg>
<div class="a" style="left:464.4px;top:589.2px;width:592.8px;height:20.6px;background:#1f1f1f;border-radius:2.4px;border:1px solid #5c5c5c;box-sizing:border-box;"></div>
<span class="a t" id="t77" style="top:591.14px;line-height:16.52px;font-size:11.8px;color:#efefef;font-family:'Liberation Sans', sans-serif;letter-spacing:0.306px;left:469.4px;">encryptWithSalt</span>
<div class="a" style="left:935.4px;top:593.0px;width:12.8px;height:12.8px;background:#a3a3a3;border-radius:50%;"></div>
<svg class="a" style="left:938.8px;top:596.4px;width:6px;height:6px;" viewBox="0 0 3 3"><path d="M.5.5L2.5 2.5M2.5.5L.5 2.5" stroke="#1f1f1f" stroke-width=".7"/></svg>
<span class="a t" id="t78" style="top:591.14px;line-height:16.52px;font-size:11.8px;color:#9d9d9d;font-family:'Liberation Sans', sans-serif;letter-spacing:0.129px;left:957.0px;">2 matches</span>
<div class="a" style="left:1015.4px;top:589.8px;width:1.0px;height:19.4px;background:#5c5c5c;"></div>
<div class="a" style="left:1036.6px;top:589.8px;width:1.0px;height:19.4px;background:#5c5c5c;"></div>
<svg class="a" style="left:1021.2px;top:595.2px;width:11.2px;height:8.4px;" viewBox="0 0 5.6 4.2"><path d="M.8 3.2L2.8 1.1L4.8 3.2" stroke="#d6d6d6" stroke-width=".8" fill="none"/></svg>
<svg class="a" style="left:1042px;top:595.2px;width:11.2px;height:8.4px;" viewBox="0 0 5.6 4.2"><path d="M.8 1L2.8 3.1L4.8 1" stroke="#d6d6d6" stroke-width=".8" fill="none"/></svg>
<span class="a t" id="t79" style="top:591.14px;line-height:16.52px;font-size:11.8px;color:#e3e3e3;font-family:'Liberation Sans', sans-serif;font-weight:700;letter-spacing:0.053px;left:1068.4px;">Aa</span>
<span class="a t" id="t80" style="top:590.54px;line-height:16.52px;font-size:11.8px;color:#e3e3e3;font-family:'Liberation Sans', sans-serif;font-weight:700;left:1099.6px;">.*</span>
<div class="a" style="left:1122px;top:589.2px;width:82.4px;height:19.6px;border-radius:9.8px;border:1.1px solid #4d6eae;box-sizing:border-box;"></div>
<span class="a t" id="t81" style="top:590.94px;line-height:16.52px;font-size:11.8px;color:#7cacf8;font-family:'Liberation Sans', sans-serif;letter-spacing:0.111px;left:1144.8px;-webkit-text-stroke:0.6px currentColor;">Cancel</span>
<div class="a" style="left:435.8px;top:615.0px;width:773.4px;height:24px;background:#282828;"></div>
<div class="a" style="left:435.8px;top:614.6px;width:773.4px;height:1.0px;background:#454545;"></div>
<span class="a t" id="t82" style="top:617.84px;line-height:17.92px;font-size:12.8px;color:#6ea0f2;font-family:'Liberation Sans', sans-serif;font-weight:700;letter-spacing:0.161px;left:443.2px;">{ }</span>
<span class="a t" id="t83" style="top:618.94px;line-height:16.52px;font-size:11.8px;color:#d0d0d0;font-family:'Liberation Sans', sans-serif;letter-spacing:0.029px;left:469.4px;">Line 1, Column 342193</span>
<span class="a t" id="t84" style="top:618.94px;line-height:16.52px;font-size:11.8px;color:#d0d0d0;font-family:'Liberation Sans', sans-serif;letter-spacing:0.022px;left:1122px;">Coverage: n/a</span>
<div class="a" style="left:1210.2px;top:134.4px;width:211.8px;height:505.2px;background:#282828;"></div>
<div class="a" style="left:1239.6px;top:140px;width:155.6px;height:18.8px;background:#4e4014;border-radius:9.4px;"></div>
<svg class="a" style="left:1249.2px;top:143.0px;width:12.8px;height:12.8px;" viewBox="0 0 6.4 6.4"><circle cx="3.2" cy="3.2" r="2.6" fill="none" stroke="#f3dd9a" stroke-width=".7"/><path d="M3.2 2.9V4.6" stroke="#f3dd9a" stroke-width=".7"/><circle cx="3.2" cy="1.9" r=".4" fill="#f3dd9a"/></svg>
<span class="a t" id="t85" style="top:141.14px;line-height:16.52px;font-size:11.8px;color:#f6e3a8;font-family:'Liberation Sans', sans-serif;letter-spacing:0.131px;left:1266.8px;">Paused on breakpoint</span>
<div class="a" style="left:1210.2px;top:165.0px;width:211.8px;height:1.0px;background:#353535;"></div>
<svg class="a" style="left:1218.2px;top:171.8px;width:6.4px;height:7.6px;" viewBox="0 0 3.2 3.8"><path d="M.3 .1V3.7L3 1.9Z" fill="#c7c7c7"/></svg>
<span class="a t" id="t86" style="top:167.34px;line-height:16.52px;font-size:11.8px;color:#e0e0e0;font-family:'Liberation Sans', sans-serif;letter-spacing:0.120px;left:1230px;">Watch</span>
<div class="a" style="left:1210.2px;top:186px;width:211.8px;height:1.0px;background:#353535;"></div>
<svg class="a" style="left:1217.2px;top:193.2px;width:7.6px;height:6.4px;" viewBox="0 0 3.8 3.2"><path d="M.1 .3H3.7L1.9 3Z" fill="#c7c7c7"/></svg>
<span class="a t" id="t87" style="top:187.94px;line-height:16.52px;font-size:11.8px;color:#e0e0e0;font-family:'Liberation Sans', sans-serif;letter-spacing:0.155px;left:1230px;">Breakpoints</span>
<div class="a" style="left:1210.2px;top:206.6px;width:211.8px;height:1.0px;background:#353535;"></div>
<div class="a" style="left:1215.8px;top:213.6px;width:11.2px;height:10.8px;background:#2f2f2f;border-radius:1.6px;border:1.2px solid #767676;box-sizing:border-box;"></div>
<span class="a t" id="t88" style="top:210.94px;line-height:16.52px;font-size:11.8px;color:#e0e0e0;font-family:'Liberation Sans', sans-serif;letter-spacing:0.131px;left:1233.0px;">Pause on uncaught exceptions</span>
<div class="a" style="left:1215.8px;top:230.4px;width:11.2px;height:10.8px;background:#2f2f2f;border-radius:1.6px;border:1.2px solid #767676;box-sizing:border-box;"></div>
<span class="a t" id="t89" style="top:227.74px;line-height:16.52px;font-size:11.8px;color:#e0e0e0;font-family:'Liberation Sans', sans-serif;letter-spacing:0.106px;left:1233.0px;">Pause on caught exceptions</span>
<div class="a" style="left:1210.2px;top:249.0px;width:211.8px;height:1.0px;background:#353535;"></div>
<svg class="a" style="left:1217.2px;top:257.2px;width:7.6px;height:6.4px;" viewBox="0 0 3.8 3.2"><path d="M.1 .3H3.7L1.9 3Z" fill="#c7c7c7"/></svg>
<div class="a" style="left:1228.4px;top:254px;width:12.4px;height:12.2px;border-radius:2.2px;border:1.5px solid #e8834a;box-sizing:border-box;"></div>
<div class="a" style="left:1231.8px;top:258.8px;width:2.2px;height:3.8px;background:#e8834a;"></div>
<div class="a" style="left:1235.2px;top:258.8px;width:2.6px;height:3.8px;background:#e8834a;"></div>
<span class="a t" id="t90" style="top:251.94px;line-height:16.52px;font-size:11.8px;color:#e0e0e0;font-family:'Liberation Sans', sans-serif;letter-spacing:0.235px;left:1246px;">6175.3e0065199816fec4.js</span>
<div class="a" style="left:1210.2px;top:269.8px;width:211.8px;height:18.8px;background:#574612;"></div>
<div class="a" style="left:1228.6px;top:273.6px;width:11.8px;height:11.6px;background:#6ea3f7;border-radius:1.8px;"></div>
<svg class="a" style="left:1230.6px;top:275.4px;width:8px;height:7.8px;" viewBox="0 0 4 3.9"><path d="M.7 2L1.7 3L3.4 .8" stroke="#16233f" stroke-width=".85" fill="none"/></svg>
<span class="a t" id="t91" style="top:271.41px;line-height:14.78px;font-size:10.56px;color:#a9965d;font-family:'Liberation Mono', monospace;letter-spacing:-0.011px;left:1246.8px;">&quot;use strict&quot;;(self.we…</span>
<span class="a t" id="t92" style="top:271.08px;line-height:16.24px;font-size:11.6px;color:#f3e3a4;font-family:'Liberation Sans', sans-serif;left:1410.8px;">1</span>
<div class="a" style="left:1210.2px;top:290.6px;width:211.8px;height:1.0px;background:#353535;"></div>
<svg class="a" style="left:1217.2px;top:297.8px;width:7.6px;height:6.4px;" viewBox="0 0 3.8 3.2"><path d="M.1 .3H3.7L1.9 3Z" fill="#c7c7c7"/></svg>
<span class="a t" id="t93" style="top:292.54px;line-height:16.52px;font-size:11.8px;color:#e0e0e0;font-family:'Liberation Sans', sans-serif;letter-spacing:-0.131px;left:1230px;">Scope</span>
<div class="a" style="left:1210.2px;top:311.2px;width:211.8px;height:1.0px;background:#353535;"></div>
<svg class="a" style="left:1216.8px;top:320.0px;width:7.6px;height:6.4px;" viewBox="0 0 3.8 3.2"><path d="M.1 .3H3.7L1.9 3Z" fill="#c7c7c7"/></svg>
<span class="a t" id="t94" style="top:315.78px;line-height:14.84px;font-size:10.6px;color:#e0e0e0;font-family:'Liberation Mono', monospace;letter-spacing:-0.119px;left:1229.2px;">Local</span>
<span class="a t" id="t95" style="top:331.98px;line-height:14.84px;font-size:10.6px;color:#7d7d7d;font-family:'Liberation Mono', monospace;letter-spacing:-0.038px;left:1237.2px;"><span style="color:#9a94a8">this</span><span style="color:#8c8c8c">: </span>undefined</span>
<svg class="a" style="left:1217.8px;top:352.0px;width:6.4px;height:7.6px;" viewBox="0 0 3.2 3.8"><path d="M.3 .1V3.7L3 1.9Z" fill="#c7c7c7"/></svg>
<span class="a t" id="t96" style="top:348.58px;line-height:14.84px;font-size:10.6px;color:#e0e0e0;font-family:'Liberation Mono', monospace;letter-spacing:-0.043px;left:1229.2px;">Closure (processAccountInfo)</span>
<svg class="a" style="left:1217.8px;top:369.0px;width:6.4px;height:7.6px;" viewBox="0 0 3.2 3.8"><path d="M.3 .1V3.7L3 1.9Z" fill="#c7c7c7"/></svg>
<span class="a t" id="t97" style="top:365.58px;line-height:14.84px;font-size:10.6px;color:#e0e0e0;font-family:'Liberation Mono', monospace;letter-spacing:-0.074px;left:1229.2px;">Closure</span>
<svg class="a" style="left:1217.8px;top:386.2px;width:6.4px;height:7.6px;" viewBox="0 0 3.2 3.8"><path d="M.3 .1V3.7L3 1.9Z" fill="#c7c7c7"/></svg>
<span class="a t" id="t98" style="top:382.78px;line-height:14.84px;font-size:10.6px;color:#e0e0e0;font-family:'Liberation Mono', monospace;letter-spacing:-0.037px;left:1229.2px;">Closure (86175)</span>
<svg class="a" style="left:1217.8px;top:403.0px;width:6.4px;height:7.6px;" viewBox="0 0 3.2 3.8"><path d="M.3 .1V3.7L3 1.9Z" fill="#c7c7c7"/></svg>
<span class="a t" id="t99" style="top:399.58px;line-height:14.84px;font-size:10.6px;color:#e0e0e0;font-family:'Liberation Mono', monospace;letter-spacing:-0.026px;left:1229.2px;">Global</span>
<span class="a t" id="t100" style="top:399.98px;line-height:14.84px;font-size:10.6px;color:#e0e0e0;font-family:'Liberation Mono', monospace;letter-spacing:-0.093px;left:1382.6px;">Window</span>
<div class="a" style="left:1210.2px;top:415.4px;width:211.8px;height:1.0px;background:#353535;"></div>
<svg class="a" style="left:1217.2px;top:422.6px;width:7.6px;height:6.4px;" viewBox="0 0 3.8 3.2"><path d="M.1 .3H3.7L1.9 3Z" fill="#c7c7c7"/></svg>
<span class="a t" id="t101" style="top:417.34px;line-height:16.52px;font-size:11.8px;color:#e0e0e0;font-family:'Liberation Sans', sans-serif;letter-spacing:0.089px;left:1230px;">Call Stack</span>
<div class="a" style="left:1210.2px;top:436px;width:211.8px;height:1.0px;background:#353535;"></div>
<svg class="a" style="left:1215.2px;top:442.8px;width:10px;height:10px;" viewBox="0 0 5 5"><path d="M.4 1.4H2.6V.3L4.8 2.5L2.6 4.7V3.6H.4Z" fill="#6ea0f2"/></svg>
<span class="a t" id="t102" style="top:439.34px;line-height:16.52px;font-size:11.8px;color:#e0e0e0;font-family:'Liberation Sans', sans-serif;letter-spacing:0.195px;left:1229.2px;">(anonymous)</span>
<span class="a t" id="t103" style="top:453.34px;line-height:16.52px;font-size:11.8px;color:#a6a6a6;font-family:'Liberation Sans', sans-serif;letter-spacing:0.154px;left:1407.6px;transform:translateX(-100%);">6175.3e0065199816fec4.js:1</span>
<div class="a" style="left:1210.2px;top:470.8px;width:211.8px;height:1.0px;background:#353535;"></div>
<span class="a t" id="t104" style="top:473.74px;line-height:16.52px;font-size:11.8px;color:#e0e0e0;font-family:'Liberation Sans', sans-serif;left:1229.2px;">e</span>
<span class="a t" id="t105" style="top:489.74px;line-height:16.52px;font-size:11.8px;color:#a6a6a6;font-family:'Liberation Sans', sans-serif;letter-spacing:0.342px;left:1414px;transform:translateX(-100%);">main.36624ed36fb0ff5b.js:2217</span>
<div class="a" style="left:1210.2px;top:507.2px;width:211.8px;height:1.0px;background:#353535;"></div>
<span class="a t" id="t106" style="top:509.34px;line-height:16.52px;font-size:11.8px;color:#e0e0e0;font-family:'Liberation Sans', sans-serif;left:1229.2px;">l</span>
<span class="a t" id="t107" style="top:524.94px;line-height:16.52px;font-size:11.8px;color:#a6a6a6;font-family:'Liberation Sans', sans-serif;letter-spacing:0.342px;left:1414px;transform:translateX(-100%);">main.36624ed36fb0ff5b.js:2217</span>
<div class="a" style="left:1210.2px;top:542.4px;width:211.8px;height:1.0px;background:#353535;"></div>
<span class="a t" id="t108" style="top:545.14px;line-height:16.52px;font-size:11.8px;color:#e0e0e0;font-family:'Liberation Sans', sans-serif;letter-spacing:0.195px;left:1229.2px;">(anonymous)</span>
<span class="a t" id="t109" style="top:560.14px;line-height:16.52px;font-size:11.8px;color:#a6a6a6;font-family:'Liberation Sans', sans-serif;letter-spacing:0.342px;left:1414px;transform:translateX(-100%);">main.36624ed36fb0ff5b.js:2217</span>
<div class="a" style="left:1210.2px;top:577.6px;width:211.8px;height:1.0px;background:#353535;"></div>
<span class="a t" id="t110" style="top:580.54px;line-height:16.52px;font-size:11.8px;color:#e0e0e0;font-family:'Liberation Sans', sans-serif;left:1229.2px;">Pe</span>
<span class="a t" id="t111" style="top:595.94px;line-height:16.52px;font-size:11.8px;color:#a6a6a6;font-family:'Liberation Sans', sans-serif;letter-spacing:0.036px;left:1406.4px;transform:translateX(-100%);">polyfills.a660c…41db75bc7.js:1</span>
<div class="a" style="left:1210.2px;top:613.4px;width:211.8px;height:1.0px;background:#353535;"></div>
<span class="a t" id="t112" style="top:616.14px;line-height:16.52px;font-size:11.8px;color:#e0e0e0;font-family:'Liberation Sans', sans-serif;letter-spacing:0.195px;left:1229.2px;">(anonymous)</span>
<span class="a t" id="t113" style="top:631.54px;line-height:16.52px;font-size:11.8px;color:#a6a6a6;font-family:'Liberation Sans', sans-serif;letter-spacing:0.342px;left:1414px;transform:translateX(-100%);">main.36624ed36fb0ff5b.js:2217</span>
<div class="a" style="left:219.4px;top:639.2px;width:1202.6px;height:186.8px;background:#282828;"></div>
<div class="a" style="left:219.4px;top:639.2px;width:1202.6px;height:25.4px;background:#3b3b3b;"></div>
<div class="a" style="left:219.4px;top:638.8px;width:1202.6px;height:1.2px;background:#555;"></div>
<div class="a" style="left:219.4px;top:664.4px;width:1202.6px;height:1.2px;background:#484848;"></div>
<div class="a" style="left:232.8px;top:645.9px;width:2.6px;height:2.6px;background:#e6e6e6;border-radius:50%;"></div>
<div class="a" style="left:232.8px;top:650.7px;width:2.6px;height:2.6px;background:#e6e6e6;border-radius:50%;"></div>
<div class="a" style="left:232.8px;top:655.5px;width:2.6px;height:2.6px;background:#e6e6e6;border-radius:50%;"></div>
<span class="a t" id="t114" style="top:643.74px;line-height:16.52px;font-size:11.8px;color:#d6d6d6;font-family:'Liberation Sans', sans-serif;letter-spacing:0.100px;left:255.2px;">Console</span>
<span class="a t" id="t115" style="top:643.74px;line-height:16.52px;font-size:11.8px;color:#7cacf8;font-family:'Liberation Sans', sans-serif;letter-spacing:0.219px;left:319.2px;">What&#x27;s new</span>
<svg class="a" style="left:389.2px;top:647.8px;width:9.6px;height:9.6px;" viewBox="0 0 4.8 4.8"><path d="M.7.7L4.1 4.1M4.1.7L.7 4.1" stroke="#c7c7c7" stroke-width=".75" fill="none"/></svg>
<div class="a" style="left:310.6px;top:663.4px;width:92.4px;height:2px;background:#7cacf8;"></div>
<svg class="a" style="left:1402.8px;top:646.6px;width:12.4px;height:12.4px;" viewBox="0 0 6.2 6.2"><path d="M.8.8L5.4 5.4M5.4.8L.8 5.4" stroke="#d6d6d6" stroke-width=".85" fill="none"/></svg>
<div class="a" style="left:219.4px;top:666px;width:1202.6px;height:25.2px;background:#272727;"></div>
<div class="a" style="left:219.4px;top:690.2px;width:1202.6px;height:1.0px;background:#3c3c3c;"></div>
<span class="a t" id="t116" style="top:671.34px;line-height:16.52px;font-size:11.8px;color:#ececec;font-family:'Liberation Sans', sans-serif;letter-spacing:0.192px;left:234px;">Highlights from the Chrome 123 update</span>
<span class="a t" id="t117" style="top:718.46px;line-height:19.88px;font-size:14.2px;color:#8fb2ee;font-family:'Liberation Sans', sans-serif;font-weight:700;letter-spacing:-0.135px;left:237.0px;">Easter egg</span>
<span class="a t" id="t118" style="top:751.42px;line-height:15.96px;font-size:11.4px;color:#ececec;font-family:'Liberation Sans', sans-serif;letter-spacing:0.298px;left:237.0px;">There&#x27;s an Easter egg somewhere in DevTools, behind a colorful 💫 emoji. Can you find it?</span>
<span class="a t" id="t119" style="top:780.46px;line-height:19.88px;font-size:14.2px;color:#8fb2ee;font-family:'Liberation Sans', sans-serif;font-weight:700;letter-spacing:-0.255px;left:237.0px;">Emulate a focused page in Elements &gt; Styles</span>
<span class="a t" id="t120" style="top:811.82px;line-height:15.96px;font-size:11.4px;color:#ececec;font-family:'Liberation Sans', sans-serif;letter-spacing:0.345px;left:237.0px;">The Elements &gt; Styles tab gets an option to emulate a focused page under the element state (:hov)</span>
<svg class="a" style="left:822px;top:720.4px;width:249.4px;height:104px;overflow:hidden;" viewBox="0 0 124.7 52">
<rect x="0" y="0" width="124.7" height="52" fill="#4579ee"/>
<g stroke="#6b95f1" stroke-width=".35" fill="none" opacity=".8">
<path d="M0 9H124.7M0 27.8H124.7M0 46H124.7M12 0V52M31 0V52M50 0V52M69 0V52M88 0V52M107 0V52"/>
<path d="M12 9L50 46M50 9L12 46"/>
</g>
<g stroke="#b0c8f8" stroke-width="1.25" fill="none">
<circle cx="31.2" cy="30.6" r="21.8"/>
<circle cx="31.2" cy="30.6" r="15.9"/>
<path d="M31.2 8.9H72"/>
<circle cx="31.2" cy="30.6" r="46.8"/>
<path d="M0 17L10.5 33.5L12 52"/>
</g>
<rect x="48.8" y="39.6" width="24.6" height="17" rx="3.2" fill="#cc342a"/>
<path d="M58.6 44.2V51.8L65.4 48Z" fill="#fff"/>
<text x="85.4" y="55.9" font-family="Liberation Sans, sans-serif" font-size="15.5" fill="#fff" textLength="28.6" lengthAdjust="spacingAndGlyphs">new</text>
</svg>
</div></body></html>
